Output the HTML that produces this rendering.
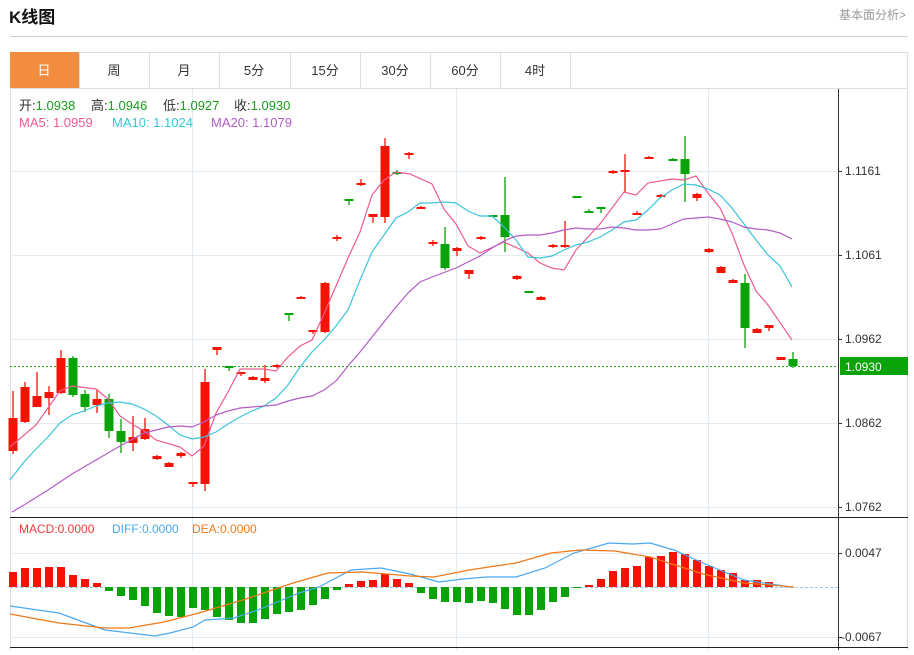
<!DOCTYPE html>
<html><head><meta charset="utf-8"><style>
body{margin:0;background:#fff;width:914px;height:650px;overflow:hidden;font-family:"Liberation Sans","Noto Sans CJK SC",sans-serif;}
</style></head><body>
<svg width="914" height="650" xmlns="http://www.w3.org/2000/svg" font-family="Liberation Sans, Noto Sans CJK SC, sans-serif">
<text x="9" y="23" font-size="17" font-weight="bold" fill="#111">K线图</text>
<text x="906" y="19" font-size="12" fill="#999" text-anchor="end">基本面分析&gt;</text>
<line x1="10" y1="36.5" x2="908" y2="36.5" stroke="#d0d0d0"/>
<rect x="10.5" y="52.5" width="897" height="600" fill="none" stroke="#ddd"/>
<rect x="10" y="52" width="69" height="36" fill="#f28c3e"/>
<g stroke="#ddd"><line x1="79.5" y1="52" x2="79.5" y2="88"/><line x1="149.5" y1="52" x2="149.5" y2="88"/><line x1="219.5" y1="52" x2="219.5" y2="88"/><line x1="290.5" y1="52" x2="290.5" y2="88"/><line x1="360.5" y1="52" x2="360.5" y2="88"/><line x1="430.5" y1="52" x2="430.5" y2="88"/><line x1="500.5" y1="52" x2="500.5" y2="88"/><line x1="570.5" y1="52" x2="570.5" y2="88"/><line x1="10" y1="88.5" x2="908" y2="88.5"/></g>
<g font-size="13" fill="#333" text-anchor="middle"><text x="44" y="75" fill="#fff">日</text><text x="114" y="75">周</text><text x="184" y="75">月</text><text x="254" y="75">5分</text><text x="325" y="75">15分</text><text x="395" y="75">30分</text><text x="465" y="75">60分</text><text x="535" y="75">4时</text></g>
<g stroke="#e3ebf2"><line x1="10" y1="171.5" x2="838" y2="171.5"/><line x1="10" y1="255.5" x2="838" y2="255.5"/><line x1="10" y1="339.5" x2="838" y2="339.5"/><line x1="10" y1="423.5" x2="838" y2="423.5"/><line x1="10" y1="507.5" x2="838" y2="507.5"/><line x1="10" y1="553.5" x2="838" y2="553.5"/><line x1="10" y1="637.5" x2="838" y2="637.5"/><line x1="192.5" y1="89" x2="192.5" y2="650"/><line x1="456.5" y1="89" x2="456.5" y2="650"/><line x1="708.5" y1="89" x2="708.5" y2="650"/></g>
<g font-size="13" fill="#333"><text x="19" y="110">开:<tspan fill="#1a9e1a">1.0938</tspan></text><text x="91" y="110">高:<tspan fill="#1a9e1a">1.0946</tspan></text><text x="163" y="110">低:<tspan fill="#1a9e1a">1.0927</tspan></text><text x="234" y="110">收:<tspan fill="#1a9e1a">1.0930</tspan></text>
<text x="19" y="127" fill="#ee5a93">MA5: 1.0959</text><text x="112" y="127" fill="#3bc4dc">MA10: 1.1024</text><text x="211" y="127" fill="#b45cc8">MA20: 1.1079</text></g>
<line x1="838.5" y1="89" x2="838.5" y2="650" stroke="#333"/>
<line x1="10" y1="517.5" x2="908" y2="517.5" stroke="#222"/>
<line x1="10" y1="647.5" x2="908" y2="647.5" stroke="#222"/>
<g font-size="12" fill="#333"><text x="845" y="175">1.1161</text><text x="845" y="259">1.1061</text><text x="845" y="343">1.0962</text><text x="845" y="427">1.0862</text><text x="845" y="511">1.0762</text><text x="845" y="557">0.0047</text><text x="841" y="641">-0.0067</text></g>
<g stroke="#333"><line x1="838" y1="171.5" x2="842" y2="171.5"/><line x1="838" y1="255.5" x2="842" y2="255.5"/><line x1="838" y1="339.5" x2="842" y2="339.5"/><line x1="838" y1="423.5" x2="842" y2="423.5"/><line x1="838" y1="507.5" x2="842" y2="507.5"/><line x1="838" y1="553.5" x2="842" y2="553.5"/><line x1="838" y1="637.5" x2="842" y2="637.5"/></g>
<line x1="10" y1="366.5" x2="838" y2="366.5" stroke="#12b312" stroke-dasharray="2,2"/>
<rect x="840" y="357" width="68" height="18" fill="#0aa30a"/>
<text x="845" y="371" font-size="12" fill="#fff">1.0930</text>
<g id="candles"></g>
<polyline fill="none" stroke="#ee5a93" stroke-width="1.2" points="10,447 36,425 60,391 72,386 96,389 108,399 120,416 132,424 144,431 156,440 180,447 192,456 204,446 216,413 228,392 240,369 252,369 264,369 276,371 288,357 300,346 312,340 324,314 336,286 348,258 360,232 372,195 384,180 396,172 410,174 432,184 444,209 456,224 468,246 480,253 504,242 528,253 540,263 552,268 564,270 576,250 600,224 624,192 636,195 648,183 672,179 684,180 696,176 708,193 720,208 732,233 744,265 756,291 768,305 792,340"/>
<polyline fill="none" stroke="#3bc4dc" stroke-width="1.2" points="10,480 24,462 36,449 48,437 60,423 72,415 84,411 96,406 108,403 120,402 132,404 144,409 156,416 168,425 180,435 192,439 204,437 216,432 228,424 240,417 252,411 264,406 276,398 288,385 300,367 312,352 324,340 336,326 348,310 360,280 372,252 384,235 396,218 408,212 420,203 432,203 444,202 456,203 468,211 480,216 492,216 504,227 516,240 528,257 540,258 552,256 564,250 576,245 588,242 600,237 612,230 624,222 636,220 648,210 660,198 672,190 684,184 696,185 708,189 720,195 732,208 744,224 756,240 768,255 780,266 792,287"/>
<polyline fill="none" stroke="#b45cc8" stroke-width="1.2" points="12,512 24,505 48,490 72,474 96,460 120,446 144,433 168,427 180,426 192,427 204,422 216,415 228,411 240,408 264,406 276,405 288,401 300,398 312,396 324,390 336,381 348,366 360,352 372,337 384,322 396,307 408,293 420,282 432,277 456,268 468,262 480,256 492,248 504,241 516,236 528,235 540,235 552,233 564,230 576,228 588,229 600,229 612,227 624,228 636,230 648,230 660,229 672,224 684,219 696,218 708,217 720,219 732,222 744,227 756,229 768,230 780,233 792,239"/>
<g font-size="12"><text x="19" y="533" fill="#f03a3a">MACD:0.0000</text><text x="112" y="533" fill="#4aa8f0">DIFF:0.0000</text><text x="192" y="533" fill="#f07818">DEA:0.0000</text></g>
<line x1="10" y1="587.5" x2="838" y2="587.5" stroke="#9cc8e0" stroke-dasharray="3,2"/>
<g id="bars"></g>
<polyline fill="none" stroke="#4aa8f0" stroke-width="1.2" points="10,606 59,613 105,630 155,636 170,633 193,627 205,620 234,618 258,610 299,593 319,587 351,570 381,568 410,574 439,582 463,579 486,577 516,577 545,568 574,553 609,543 633,544 650,543 674,550 703,563 744,580 791,587"/>
<polyline fill="none" stroke="#f07818" stroke-width="1.2" points="10,614 59,623 105,628 129,628 164,622 199,613 246,599 293,583 328,573 363,572 410,576 434,577 469,570 516,563 551,553 580,550 615,551 650,557 703,574 744,583 794,587"/>
</svg>
<script>
var C=[[418,451,391,454,'r'],[387,422,382,423,'r'],[396,407,372,407,'r'],[392,398,386,415,'r'],[358,393,350,394,'r'],[358,395,356,397,'g'],[394,407,390,412,'g'],[399,405,389,413,'r'],[399,431,394,438,'g'],[431,442,419,453,'g'],[437,443,416,451,'r'],[429,439,418,440,'r'],[456,459,455,460,'r'],[463,467,462,467,'r'],[453,456,452,458,'r'],[482,484,482,487,'r'],[382,484,369,491,'r'],[347,350,347,355,'r'],[366,368,366,371,'g'],[372,374,372,376,'r'],[377,380,376,380,'r'],[378,381,365,383,'r'],[365,367,364,368,'r'],[313,314,313,321,'g'],[297,298,296,299,'r'],[330,332,330,334,'r'],[283,332,282,333,'r'],[237,239,235,241,'r'],[199,200,199,205,'g'],[183,184,179,186,'r'],[214,217,214,223,'r'],[146,217,138,223,'r'],[172,173,170,175,'g'],[153,155,152,159,'r'],[207,208,206,208,'r'],[242,244,240,246,'r'],[244,268,227,270,'g'],[248,251,247,256,'r'],[270,274,270,279,'r'],[237,239,236,240,'r'],[215,216,215,216,'g'],[215,237,177,252,'g'],[276,279,275,280,'r'],[291,292,291,292,'g'],[297,300,296,300,'r'],[245,247,244,248,'r'],[245,247,221,248,'r'],[196,198,196,198,'g'],[211,213,209,213,'g'],[207,209,207,213,'g'],[171,172,170,174,'r'],[170,172,154,192,'r'],[213,215,211,215,'r'],[157,158,156,159,'r'],[195,197,194,198,'r'],[159,161,158,161,'g'],[159,174,136,202,'g'],[194,198,193,201,'r'],[249,252,248,253,'r'],[267,273,266,273,'r'],[280,283,279,283,'r'],[283,328,274,348,'g'],[329,333,328,333,'r'],[325,328,325,331,'r'],[357,360,357,360,'r'],[359,366,352,368,'g']];
var B=[572,568,568,567,567,575,579,583,591,596,600,606,613,616,617,608,610,617,620,623,623,619,614,612,610,605,599,590,584,581,580,574,579,583,593,599,602,602,603,601,603,609,615,615,610,602,597,588,585,579,571,568,566,557,556,552,554,560,566,570,573,580,580,582,586,586];
var ns="http://www.w3.org/2000/svg",g=document.getElementById('candles'),b=document.getElementById('bars');
function el(p,t,a){var e=document.createElementNS(ns,t);for(var k in a)e.setAttribute(k,a[k]);p.appendChild(e);}
C.forEach(function(c,i){var x=13+12*i,col=c[4]=='r'?'#f21405':'#09a209';
el(g,'line',{x1:x,y1:c[2],x2:x,y2:c[3],stroke:col,'stroke-width':1.3});
el(g,'rect',{x:x-4.5,y:c[0],width:9,height:Math.max(2,c[1]-c[0]),fill:col});});
B.forEach(function(t,i){var x=13+12*i,z=587;if(i>63)return;
if(t<z)el(b,'rect',{x:x-4,y:t,width:8,height:z-t,fill:'#f21405'});else el(b,'rect',{x:x-4,y:z,width:8,height:t-z,fill:'#09a209'});});
</script>
</body></html>
